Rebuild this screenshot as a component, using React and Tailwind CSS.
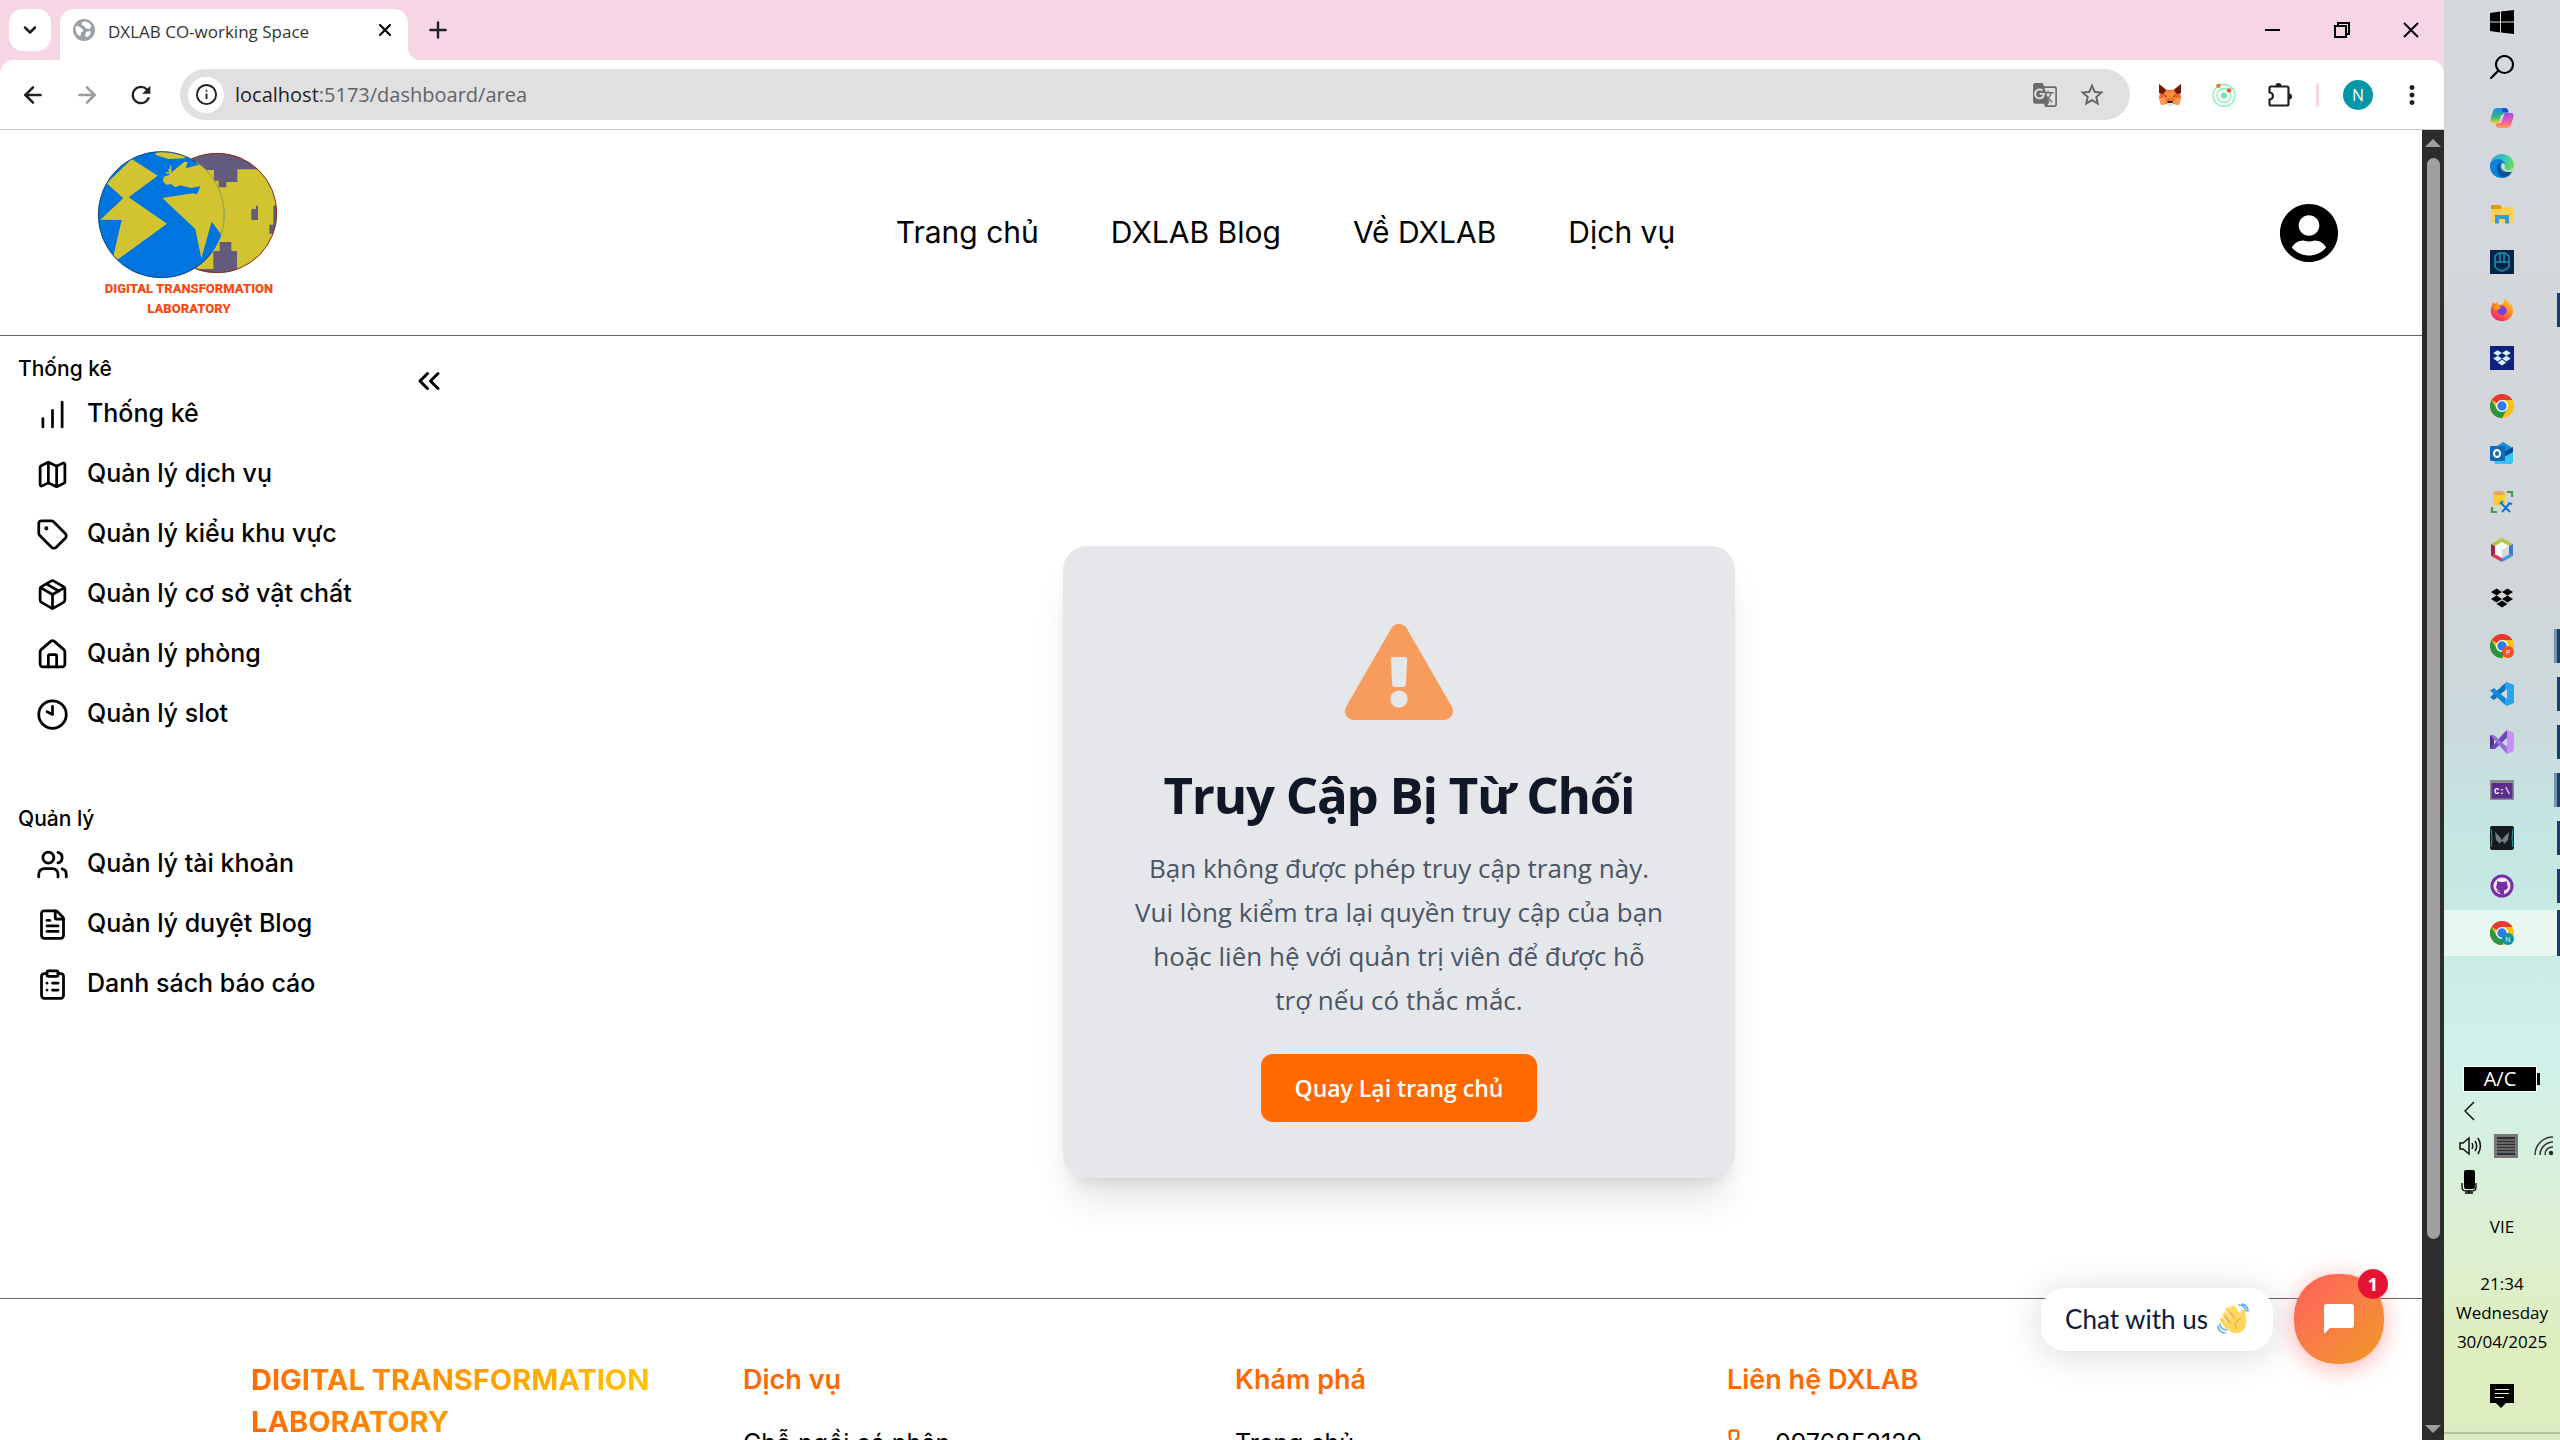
import React from "react";
import {
  ArrowLeft,
  ArrowRight,
  ChevronDown,
  ChevronsLeft,
  ChartNoAxesColumnIncreasing,
  ClipboardList,
  Clock10,
  FileText,
  House,
  Info,
  Map as MapIcon,
  Package,
  Phone,
  Plus,
  Tag,
  Users,
  X,
} from "lucide-react";
import { FaExclamationTriangle, FaUserCircle } from "react-icons/fa";
import { MdGTranslate, MdStarOutline, MdMoreVert, MdRefresh } from "react-icons/md";

const UI = "font-['Open_Sans','Noto_Sans',sans-serif]";
const BRAND = "font-['Inter','Noto_Sans',sans-serif]";

/* ---------- Browser chrome ---------- */

function Favicon() {
  return (
    <svg viewBox="0 0 24 24" className="size-[22px]">
      <circle cx="12" cy="12" r="12" fill="#9aa0a6" />
      <path d="M3 8c3-1 4 1 6 2s3 3 1 4-1 3-2 5c-3-1-6-5-5-11zM11 3c3-1 8 1 9 5l-2 3-4-1c-2-1-1-3-3-3s-2-3 0-4zM15 14l4-1c1 3-1 6-5 7-1-2-1-5 1-6z" fill="#fff" />
    </svg>
  );
}

function MetaMask() {
  return (
    <svg viewBox="0 0 24 24" className="size-6">
      <path d="M1 1l8 6h6l8-6-1 9 1 5-2 7-6-1-3 2-3-2-6 1-2-7 1-5z" fill="#f5672b" />
      <path d="M1 1l7 6-3 4-4-1zM23 1l-7 6 3 4 4-1z" fill="#6b1d0b" />
      <path d="M8 8h8l2 6-6 2-6-2z" fill="#ff8a3c" />
      <path d="M1 15h6l2 5-6 2zM23 15h-6l-2 5 6 2z" fill="#ff9a55" />
      <path d="M6.500 12l3 1.500H7zM17.500 12l-3 1.500H17z" fill="#3a1408" />
      <path d="M9 19h6v3l-3 1-3-1z" fill="#dfe3ea" />
      <path d="M10 18h4l1 2H9z" fill="#2b2320" />
    </svg>
  );
}

function Radar() {
  return (
    <svg viewBox="0 0 24 24" className="size-6" fill="none">
      <circle cx="12" cy="12.500" r="11" stroke="#86f3b0" strokeWidth="1.300" />
      <circle cx="12" cy="12.500" r="7" stroke="#7df0c0" strokeWidth="1.300" />
      <circle cx="12" cy="12.500" r="3" fill="#6fe8a0" />
      <circle cx="6.500" cy="2.800" r="2.300" fill="#f47b3f" />
      <circle cx="17" cy="7.500" r="2.300" fill="#ef5a35" />
    </svg>
  );
}

function Puzzle() {
  return (
    <svg viewBox="0 0 24 24" className="size-6">
      <path d="M3 3.500h16a1.500 1.500 0 0 1 1.500 1.500v16a1.500 1.500 0 0 1-1.500 1.500H3A1.500 1.500 0 0 1 1.500 21v-4.500a3.500 3.500 0 0 0 0-7V5A1.500 1.500 0 0 1 3 3.500z" fill="none" stroke="#202124" strokeWidth="2.200" strokeLinejoin="round" />
      <path d="M7.500 3a3 3 0 0 1 6 0zM21 10.500a3 3 0 0 1 0 6z" fill="#202124" />
    </svg>
  );
}

function WindowButtons() {
  return (
    <div className="ml-auto flex items-center gap-[53px] pr-[25px]">
      <button aria-label="Minimize">
        <svg viewBox="0 0 16 16" className="size-4" stroke="#000" strokeWidth="2"><path d="M0 8h15" /></svg>
      </button>
      <button aria-label="Restore">
        <svg viewBox="0 0 16 16" className="size-4" stroke="#000" strokeWidth="2" fill="none">
          <path d="M1 4h11v11H1zM4 4V1h11v11h-3" />
        </svg>
      </button>
      <button aria-label="Close window">
        <svg viewBox="0 0 16 16" className="size-4" stroke="#000" strokeWidth="2"><path d="M1 1l14 14M15 1L1 15" /></svg>
      </button>
    </div>
  );
}

function TabStrip() {
  return (
    <div className="flex h-[60px] items-center bg-[#f6d5e4] pl-[9px]">
      <button aria-label="Search tabs" className="flex size-[42px] items-center justify-center rounded-[14px] bg-white">
        <ChevronDown className="size-5 text-[#202124]" strokeWidth={3} />
      </button>
      <div className="ml-[9px] flex h-[51px] w-[348px] items-center self-end rounded-t-[14px] bg-white pr-[13px] pb-[9px] pl-[13px]">
        <Favicon />
        <span className={`ml-[13px] pt-1 text-[17px] text-[#333] ${UI}`}>DXLAB CO-working Space</span>
        <button aria-label="Close tab" className="ml-auto">
          <X className="size-5 text-black" strokeWidth={2.5} />
        </button>
      </div>
      <div className="h-3 w-3 self-end bg-white">
        <div className="h-3 w-3 rounded-bl-xl bg-[#f6d5e4]" />
      </div>
      <button aria-label="New tab" className="ml-[5px]">
        <Plus className="size-[26px] text-[#202124]" strokeWidth={2.2} />
      </button>
      <WindowButtons />
    </div>
  );
}

function Toolbar() {
  return (
    <div className="bg-[#f6d5e4]">
      <div className="flex h-[70px] items-center rounded-t-[14px] border-b border-[#c8c8c8] bg-white pl-5">
        <button aria-label="Back"><ArrowLeft className="size-[26px] text-[#202124]" strokeWidth={2.3} /></button>
        <button aria-label="Forward" className="ml-7"><ArrowRight className="size-[26px] text-[#9a9a9a]" strokeWidth={2.3} /></button>
        <button aria-label="Reload" className="ml-[27px]"><MdRefresh className="size-[28px] text-[#202124]" /></button>
        <div className="ml-[25px] flex h-[51px] flex-1 items-center rounded-full bg-[#e0e0e0] pr-6 pl-2">
          <button aria-label="Site information" className="flex size-9 items-center justify-center rounded-full bg-white">
            <Info className="size-[23px] text-[#202124]" strokeWidth={2} />
          </button>
          <div className={`ml-[11px] text-[20px] text-[#5f6368] ${UI}`}>
            <span className="text-[#1f1f1f]">localhost</span>:5173/dashboard/area
          </div>
          <button aria-label="Translate this page" className="ml-auto"><MdGTranslate className="size-[26px] text-[#6a6a6a]" /></button>
          <button aria-label="Bookmark" className="ml-5"><MdStarOutline className="size-7 text-[#5f6368]" /></button>
        </div>
        <div className="flex items-center pr-[17px] pl-7">
          <button aria-label="MetaMask"><MetaMask /></button>
          <button aria-label="Radar extension" className="ml-[30px]"><Radar /></button>
          <button aria-label="Extensions" className="ml-8"><Puzzle /></button>
          <span className="ml-6 h-6 w-[3px] rounded bg-[#f6d5e4]" />
          <button aria-label="Profile" className={`ml-6 flex size-[30px] items-center justify-center rounded-full bg-[#0097a7] text-[16px] text-white ${UI}`}>N</button>
          <button aria-label="Menu" className="ml-6"><MdMoreVert className="size-[30px] text-[#202124]" /></button>
        </div>
      </div>
    </div>
  );
}

/* ---------- Page ---------- */

function Logo() {
  return (
    <div className="relative mt-[5px] mr-2 h-[180px] w-[190px]">
      <svg viewBox="0 0 570 540" className="h-full w-full">
        <clipPath id="left-globe"><circle cx="202" cy="209" r="190" /></clipPath>
        <clipPath id="right-globe"><circle cx="369" cy="204" r="180" /></clipPath>
        <g clipPath="url(#right-globe)">
          <rect width="570" height="540" fill="#d2c430" />
          <path d="M280 0h290v73H430v38h-33v16h-23v-20h-14V75h-80zM472 192h14v-10h6v43h-20zM538 182h20v84h-32v-27h12zM358 318h19v-27h35v27h17v80H300v-26h58z" fill="#635b7b" />
        </g>
        <circle cx="369" cy="204" r="179" fill="none" stroke="#8f2f25" strokeWidth="3" />
        <g clipPath="url(#left-globe)">
          <rect width="570" height="540" fill="#0075e0" />
          <path d="M185 10h88v30l-50 2-38-12zM113 42l78 50-87 65 115 79L72 343l-15-5 26-113-64-1 69-64-50-45z" fill="#d2c430" />
          <path d="M262 58l9-8 10 2-6 18 46-12 90 40v172l-28 0-30-40-31 110-18-88-99-93 92-14 12 3 10-24-28 5-20-5-12-3-16 6-10-9-16 1-10-10 2-14 14-4z" fill="#d2c430" />
          <path d="M230 62v20l-14 2M224 72l6 14" fill="none" stroke="#d2c430" strokeWidth="4" />
        </g>
        <circle cx="202" cy="209" r="189" fill="none" stroke="#1a4d86" strokeWidth="3" strokeDasharray="890 298" strokeDashoffset="-120" />
        <path d="M305 50A190 190 0 0 1 380 270" fill="none" stroke="#aaa43c" strokeWidth="3" />
      </svg>
      <div className="absolute inset-x-0 top-[134px] text-center font-['Roboto',sans-serif] text-[13px] leading-5 font-black text-[#fb4b12]">
        DIGITAL TRANSFORMATION
        <br />
        LABORATORY
      </div>
    </div>
  );
}

function Header() {
  return (
    <header className="flex h-[206px] items-center justify-between border-b border-[#666] pr-[83px] pl-[94px]">
      <Logo />
      <nav className={`flex gap-[72px] text-[30px] text-black ${BRAND}`}>
        <a href="#home">Trang chủ</a>
        <a href="#blog">DXLAB Blog</a>
        <a href="#about">Về DXLAB</a>
        <a href="#services">Dịch vụ</a>
      </nav>
      <button aria-label="Account"><FaUserCircle className="size-[60px] text-black" /></button>
    </header>
  );
}

const MENU = [
  {
    title: "Thống kê",
    items: [
      [ChartNoAxesColumnIncreasing, "Thống kê"],
      [MapIcon, "Quản lý dịch vụ"],
      [Tag, "Quản lý kiểu khu vực"],
      [Package, "Quản lý cơ sở vật chất"],
      [House, "Quản lý phòng"],
      [Clock10, "Quản lý slot"],
    ],
  },
  {
    title: "Quản lý",
    items: [
      [Users, "Quản lý tài khoản"],
      [FileText, "Quản lý duyệt Blog"],
      [ClipboardList, "Danh sách báo cáo"],
    ],
  },
];

function Sidebar() {
  return (
    <aside className={`flex w-[460px] justify-between pt-[18px] pr-[13px] pl-[18px] text-black ${BRAND}`}>
      <div className="flex flex-col gap-[60px]">
        {MENU.map((group) => (
          <section key={group.title}>
            <h2 className="text-[21px] leading-[30px] font-medium">{group.title}</h2>
            <ul>
              {group.items.map(([Icon, label]) => (
                <li key={label}>
                  <a href="#menu" className="flex h-[60px] items-center gap-[18px] pl-[18px] text-[25px] font-medium">
                    <Icon className="size-[33px]" strokeWidth={2} />
                    {label}
                  </a>
                </li>
              ))}
            </ul>
          </section>
        ))}
      </div>
      <button aria-label="Collapse sidebar" className="mt-[9px] self-start">
        <ChevronsLeft className="size-9" strokeWidth={2} />
      </button>
    </aside>
  );
}

function DeniedCard() {
  return (
    <section className={`flex w-[672px] flex-col items-center rounded-3xl bg-[#e5e7eb] pt-[78px] pb-14 text-center shadow-[0_30px_38px_-8px_rgba(0,0,0,0.1),0_12px_15px_-8px_rgba(0,0,0,0.1)] ${UI}`}>
      <FaExclamationTriangle className="h-24 w-[108px] text-[#f79c5c]" />
      <h1 className="mt-11 text-[51px] leading-[60px] font-bold tracking-tight text-[#101828]">Truy Cập Bị Từ Chối</h1>
      <p className="mt-[22px] text-[26px] leading-[44px] text-[#4a5565]">
        Bạn không được phép truy cập trang này.
        <br />
        Vui lòng kiểm tra lại quyền truy cập của bạn
        <br />
        hoặc liên hệ với quản trị viên để được hỗ
        <br />
        trợ nếu có thắc mắc.
      </p>
      <button className="mt-8 h-[68px] rounded-xl bg-[#ff6900] px-[34px] text-[23px] font-semibold text-white">Quay Lại trang chủ</button>
    </section>
  );
}

function FooterColumn({ title, children }) {
  return (
    <div>
      <h3 className="text-[27px] leading-[42px] font-semibold text-[#ff6900]">{title}</h3>
      <div className="mt-6 flex items-center text-[25px] leading-9 text-black">{children}</div>
    </div>
  );
}

function Footer() {
  return (
    <footer className={`border-t border-[#666] pt-[60px] ${BRAND}`}>
      <div className="mx-auto grid max-w-[1920px] grid-cols-4 gap-12">
        <div>
          <h2 className="w-[424px] bg-gradient-to-r from-[#ff6900] to-[#fdc700] bg-clip-text text-[29px] leading-[42px] font-bold text-transparent">
            DIGITAL TRANSFORMATION LABORATORY
          </h2>
        </div>
        <FooterColumn title="Dịch vụ"><a href="#seat">Chỗ ngồi cá nhân</a></FooterColumn>
        <FooterColumn title="Khám phá"><a href="#home">Trang chủ</a></FooterColumn>
        <FooterColumn title="Liên hệ DXLAB">
          <Phone className="mr-[18px] size-[30px] text-[#ff6900]" strokeWidth={2} />
          <a href="#phone">0976852120</a>
        </FooterColumn>
      </div>
    </footer>
  );
}

function WavingHand() {
  return (
    <svg viewBox="0 0 32 32" className="size-8" fill="none" strokeLinecap="round">
      <path d="M8 12l8 10M11 7l9 11M16 5l7 10" stroke="#ffd65c" strokeWidth="5" />
      <path d="M5 17l6 8" stroke="#ffd65c" strokeWidth="4.500" />
      <path d="M9 22c2 7 9 10 15 7 5-3 6-9 5-14-1-4 0-8-3-8s-2 4-3 8l-7-3z" fill="#ffd65c" />
      <path d="M19 25c-2-4 0-7 4-9M8 14l5 6M13 9l5 7" stroke="#e6a355" strokeWidth="1.200" />
      <path d="M22 2c4 0 6 2 7 6M25 1c4 1 6 3 6 7M1 23c0 4 3 7 7 7M3 21c0 3 2 5 6 6" stroke="#5daef0" strokeWidth="1.600" />
    </svg>
  );
}

function ChatWidget() {
  return (
    <div className="absolute right-[38px] bottom-[76px] flex items-center gap-[21px]">
      <button className="flex h-[63px] items-center gap-[9px] rounded-3xl bg-white px-6 font-['Lato',sans-serif] text-[26px] text-[#0e1a3a] shadow-[0_4px_36px_rgba(0,18,46,0.16)]">
        Chat with us
        <WavingHand />
      </button>
      <button aria-label="Open chat" className="relative flex size-[90px] items-center justify-center rounded-[42px] bg-gradient-to-br from-[#ff5c5c] to-[#f0991a] shadow-[0_4px_24px_rgba(255,60,60,0.4)]">
        <svg viewBox="0 0 30 30" className="size-[30px]" fill="#fff"><path d="M3 0h24a3 3 0 0 1 3 3v18a3 3 0 0 1-3 3H6l-6 6V3a3 3 0 0 1 3-3z" /></svg>
        <span className={`absolute -top-[5px] -right-1 flex size-[30px] items-center justify-center rounded-full bg-[#e81332] text-[18px] font-bold text-white ${UI}`}>1</span>
      </button>
    </div>
  );
}

function Scrollbar() {
  return (
    <div className="flex w-[22px] shrink-0 flex-col items-center bg-[#2c2c2c] pt-[9px] pb-[7px]">
      <svg viewBox="0 0 16 8" className="h-2 w-4" fill="#9f9f9f"><path d="M8 0l8 8H0z" /></svg>
      <div className="mt-[11px] h-[1081px] w-[13px] rounded-full bg-[#9f9f9f]" />
      <svg viewBox="0 0 16 8" className="mt-auto h-2 w-4" fill="#9f9f9f"><path d="M0 0h16L8 8z" /></svg>
    </div>
  );
}

/* ---------- Taskbar ---------- */

function ChromeGlyph({ badge, color }) {
  return (
    <>
      <circle cx="12" cy="12" r="12" fill="#fbc116" />
      <path d="M12 12L1.600 6A12 12 0 0 1 22.400 6H12z" fill="#e33b2e" />
      <path d="M1.600 6A12 12 0 0 0 12 24l5.200-9L12 12 6.800 15z" fill="#2a9444" />
      <circle cx="12" cy="12" r="6" fill="#fff" />
      <circle cx="12" cy="12" r="4.700" fill="#2f7cf0" />
      {badge && (
        <>
          <circle cx="18" cy="18" r="6" fill={color} />
          <text x="18" y="20.500" textAnchor="middle" fontSize="7" fill="#fff" fontFamily="Open Sans, sans-serif">{badge}</text>
        </>
      )}
    </>
  );
}

const DROPBOX = "M6.500 2.500l5.500 3.500-5.500 3.500L1 6zM17.500 2.500L23 6l-5.500 3.500L12 6zM6.500 9.500L12 13l-5.500 3.500L1 13zM17.500 9.500L23 13l-5.500 3.500L12 13zM12 14.500l5.500 3.500-5.500 3.500L6.500 18z";

const APPS = [
  { name: "Copilot", art: (
    <>
      <defs>
        <linearGradient id="cpa" x1="0" y1="0" x2="0" y2="1"><stop offset="0" stopColor="#1d8df0" /><stop offset=".6" stopColor="#35b58a" /><stop offset="1" stopColor="#f2d21f" /></linearGradient>
        <linearGradient id="cpb" x1="0" y1="0" x2="0" y2="1"><stop offset="0" stopColor="#a34bf0" /><stop offset=".6" stopColor="#f55d9a" /><stop offset="1" stopColor="#ffa14d" /></linearGradient>
      </defs>
      <path d="M7 2h8c2 0 3 1 3.500 4l-5 1-3 8c-.5 1.500-1 2-2.500 2H3c-2 0-3-1-2.500-4L3 5c.7-2 2-3 4-3z" fill="url(#cpa)" />
      <path d="M17 22H9c-2 0-3-1-3.500-4l5-1 3-8c.5-1.500 1-2 2.500-2h5c2 0 3 1 2.500 4L21 19c-.7 2-2 3-4 3z" fill="url(#cpb)" />
      <path d="M12 2h3c2 0 3 1 3.500 4.500H13c-1 0-1-3-1-4.500z" fill="#1552c9" />
      <path d="M11 9h3l-3 8H9z" fill="#d4d8db" />
    </>
  ) },
  { name: "Edge", art: (
    <>
      <defs><linearGradient id="edg" x1="0" y1="0" x2="1" y2=".4"><stop offset="0" stopColor="#1fa5e8" /><stop offset=".6" stopColor="#35c8b8" /><stop offset="1" stopColor="#6be04e" /></linearGradient></defs>
      <circle cx="12" cy="12" r="12" fill="url(#edg)" />
      <path d="M0 12c0-4 4-7 8-7s7 3 7 6c-2-2-6-1-6 3 0 5 6 8 12 6-2 2-5 4-9 4C5 24 0 19 0 12z" fill="#0f7fd8" />
      <path d="M7 14c0-3 2-5 5-5-2 2-2 4-.5 6.500C14 19 19 18 22 17c-1 3-5 6-9 6-4-1-6-5-6-9z" fill="#0d4f9e" />
      <path d="M12 9c2 0 3 1.500 3 3s-1 2 0 3c2 2 6 2 9-1v3c-4 2-9 1-11.500-2-1-2-2-4-.5-6z" fill="#d4d8db" />
    </>
  ) },
  { name: "File Explorer", art: (
    <>
      <path d="M1 3h9l2 2-2 3H1z" fill="#e09c05" />
      <path d="M1 7h10l2-2h10v16H1z" fill="#fcd152" />
      <path d="M5 13h14v8.500h-4V17h-6v4.500H5z" fill="#3a96dd" />
    </>
  ) },
  { name: "Mouse Center", art: (
    <>
      <path d="M0 0h24v24H0z" fill="#04234a" />
      <path d="M5 6l4-3h6l4 3v10c0 2-4 4-7 5-3-1-7-3-7-5zM5 12h5V3.500M19 12h-5V3.500M10 12h4" fill="none" stroke="#119aaf" strokeWidth="1.500" />
    </>
  ) },
  { name: "Firefox", mark: 1, art: (
    <>
      <defs><linearGradient id="ffx" x1="1" y1="0" x2=".3" y2="1"><stop offset="0" stopColor="#ffe23c" /><stop offset=".5" stopColor="#ff8a1e" /><stop offset="1" stopColor="#f5246e" /></linearGradient></defs>
      <path d="M15 0c1 3 4 4 6 6 3 5 3 10-1 14s-11 4-15 1C0 17 0 11 2 7l1-3 2 2c1-1 2-2 3-2l-1 3 6-1c1-2 1-4 2-6z" fill="url(#ffx)" />
      <circle cx="12" cy="12.500" r="4.700" fill="#7a42e0" />
      <path d="M4 8c3-1 5 0 7 1 0 2-3 2-4 3l-3-1z" fill="#ff9a20" />
    </>
  ) },
  { name: "Dropbox promotion", art: (
    <>
      <path d="M0 0h24v24H0z" fill="#10217c" />
      <path d={DROPBOX} transform="translate(2.400 2.200) scale(.8)" fill="#d5f0ff" />
    </>
  ) },
  { name: "Chrome", art: <ChromeGlyph /> },
  { name: "Outlook", art: (
    <>
      <path d="M4 6l9-6 10 6v14l-2 2H5z" fill="#1490df" />
      <path d="M6 14l17-7v13l-2 2H5z" fill="#35c4f3" />
      <path d="M14 10l9-5v5l-9 5z" fill="#0a4a96" />
      <rect y="4" width="15" height="15" rx="1" fill="#0f6cbd" />
      <ellipse cx="7" cy="11.500" rx="3" ry="3.500" fill="none" stroke="#fff" strokeWidth="2" />
    </>
  ) },
  { name: "SQL Server Management Studio", art: (
    <>
      <path d="M3 3h12v11c-3 2-9 2-12 0z" fill="#fcd02c" />
      <ellipse cx="9" cy="3" rx="6" ry="2" fill="#eba45c" />
      <path d="M17 2h5v5M2 17v5h5" fill="none" stroke="#3fa045" strokeWidth="2.200" />
      <path d="M11 13l9 9M20 13l-8 9M10 14l3-3M18 13l4 1" stroke="#1578cf" strokeWidth="2" />
    </>
  ) },
  { name: "NetBeans", art: (
    <>
      <path d="M12 0l11 6-4 2-7-4-7 4-4-2z" fill="#b0c644" />
      <path d="M1 6l4 2v8l-4 2z" fill="#a02542" />
      <path d="M23 6l-4 2v8l4 2z" fill="#3e78cc" />
      <path d="M1 18l4-2 7 4v4z" fill="#d83a55" />
      <path d="M23 18l-4-2-7 4v4z" fill="#4c97e6" />
      <path d="M12 4l7 4v8l-7 4-7-4V8z" fill="#f7f9fa" />
      <path d="M12 12l7-4v8l-7 4z" fill="#d3dce4" />
    </>
  ) },
  { name: "Dropbox", art: <path d={DROPBOX} fill="#000" /> },
  { name: "Chrome profile P", mark: 2, art: <ChromeGlyph badge="P" color="#f4511e" /> },
  { name: "Visual Studio Code", mark: 1, art: (
    <>
      <path d="M17 0v7L4 18l-4-2.500L13 3z" fill="#0a72b8" />
      <path d="M17 24v-7L4 6 0 8.500 13 21z" fill="#1489d2" />
      <path d="M17 0l7 3v18l-7 3-2-2V2z" fill="#27a5f0" />
      <path d="M17 7v10l-6-5z" fill="#d0dade" />
    </>
  ) },
  { name: "Visual Studio", mark: 1, art: (
    <>
      <path d="M0 5l4 2v10l-4 2z" fill="#52328f" />
      <path d="M17 0v8L5 19H0L13 4z" fill="#7048b3" />
      <path d="M0 5h4l13 12v7z" fill="#9a6ddb" />
      <path d="M17 0l7 3v18l-7 3z" fill="#c991fa" />
      <path d="M17 8v8l-4-4z" fill="#cbdcdf" />
    </>
  ) },
  { name: "Developer Command Prompt", mark: 2, art: (
    <>
      <path d="M0 2h24v20H0z" fill="#8b8b91" />
      <path d="M1.500 5h21v15.500h-21z" fill="#5b2d91" />
      <text x="12" y="16" textAnchor="middle" fontSize="9" fontWeight="bold" fill="#fff" fontFamily="Liberation Mono, monospace">C:\</text>
    </>
  ) },
  { name: "Predator Sense", mark: 1, art: (
    <>
      <rect width="24" height="24" rx="2" fill="#17191b" />
      <path d="M5 6l5 5v7l-4-4zM19 6l-5 5v7l4-4zM10 11l2 3 2-3v6l-2-2-2 2z" fill="#777c80" />
      <path d="M1 3l1 9-1 9M23 3l-1 9 1 9" stroke="#16a5bd" fill="none" />
    </>
  ) },
  { name: "GitHub Desktop", mark: 1, art: (
    <>
      <circle cx="12" cy="12" r="11.500" fill="#7a2ea6" />
      <circle cx="12" cy="12" r="8.500" fill="#f4e9fa" />
      <path d="M7 7l3 1h4l3-1v3c2 4 0 6-3 6.500v4h-4v-2c-2 0-3-1-3.500-2.500 1 0 1.500 1 3 1v-.5C7 16 5 14 7 10z" fill="#7a2ea6" />
    </>
  ) },
  { name: "Chrome profile N", mark: 1, active: true, art: <ChromeGlyph badge="N" color="#0097a7" /> },
];

function AppButton({ app }) {
  return (
    <li className={app.active ? "flex h-[46px] items-center bg-white/60" : "flex h-12 items-center"}>
      <button aria-label={app.name} className="mr-[43px] ml-[46px]">
        <svg viewBox="0 0 24 24" className="size-6">{app.art}</svg>
      </button>
      {app.mark && (
        <span className={`ml-auto w-[3px] bg-[#173f6e] ${app.active ? "h-full" : "h-[34px]"} ${app.mark === 2 ? "shadow-[-3px_0_0_#7890ae]" : ""}`} />
      )}
    </li>
  );
}

function Tray() {
  return (
    <div className={`flex flex-col text-black ${UI}`}>
      <div className="ml-[19px] flex items-center">
        <span className="flex h-[26px] w-[74px] items-center justify-center border border-white bg-black text-[20px] text-white">A/C</span>
        <span className="h-3 w-[3px] bg-black" />
      </div>
      <button aria-label="Show hidden icons" className="mt-[9px] ml-5 self-start">
        <svg viewBox="0 0 11 20" className="h-5 w-[11px]" fill="none" stroke="#111" strokeWidth="1.500"><path d="M10 1l-9 9 9 9" /></svg>
      </button>
      <div className="mt-[13px] ml-[15px] flex h-6 items-center">
        <svg viewBox="0 0 24 20" className="h-5 w-6" fill="none" stroke="#111" strokeWidth="1.500">
          <path d="M1 7v6h3l6 5V2L4 7zM13 7c1 2 1 4 0 6M16 5c2 3 2 7 0 10M19 2c3 5 3 11 0 16" />
        </svg>
        <svg viewBox="0 0 24 24" className="ml-[11px] size-6">
          <path d="M0 0h24v24H0z" fill="#777" />
          <path d="M3 3h18v18H3z" fill="#2f2f2f" />
          <path d="M3 6h18M3 9h18M3 12h18M3 15h18M3 18h18" stroke="#a0a0a0" />
        </svg>
        <svg viewBox="0 0 20 20" className="ml-4 size-5" fill="none" stroke="#333" strokeWidth="1.500">
          <path d="M1 19C1 9 9 1 19 1M6 19C6 12 12 6 19 6M11 19c0-5 3-8 8-8" />
          <circle cx="17" cy="17" r="1.500" fill="#000" />
        </svg>
      </div>
      <svg viewBox="0 0 16 24" className="mt-3 ml-[17px] h-6 w-4">
        <rect x="3" width="11" height="19" rx="2" fill="#000" />
        <path d="M1 13v4c0 3 2 4 4 4h6c3 0 4-1 4-4v-4M8 20v3M4 23h8" fill="none" stroke="#000" strokeWidth="1.300" />
      </svg>
      <div className="mt-[18px] text-center text-[17px] leading-[29px]">VIE</div>
      <div className="mt-7 text-center text-[17px] leading-[29px]">
        21:34
        <br />
        Wednesday
        <br />
        30/04/2025
      </div>
      <button aria-label="Notifications" className="mt-7 self-center">
        <svg viewBox="0 0 24 24" className="size-6">
          <path d="M0 0h24v19h-8l-5 5-5-5H0z" fill="#000" />
          <path d="M5 5.500h14M5 9.500h14M5 13.500h9" stroke="#e6f0cc" />
        </svg>
      </button>
      <div className="mt-6 mb-[6px] h-[2px] bg-[#b3c29a]" />
    </div>
  );
}

function Taskbar() {
  return (
    <aside className="flex w-[116px] shrink-0 flex-col bg-[linear-gradient(180deg,#d5d8dc_0%,#d2d5d9_38%,#cbd9dc_50%,#c4e5e2_57%,#c8ece2_66%,#d0f1ec_73%,#dbf0d6_84%,#dfeebd_94%,#dcecc0_100%)]">
      <button aria-label="Start" className="mt-[10px] self-center">
        <svg viewBox="0 0 24 24" className="size-6"><path d="M0 3l10-1.500v10H0zM11 1.400L24 0v11.500H11zM0 12.500h10v10L0 21zM11 12.500h13V24l-13-1.400z" /></svg>
      </button>
      <button aria-label="Search" className="mt-[21px] self-center">
        <svg viewBox="0 0 24 24" className="size-6" fill="none" stroke="#000" strokeWidth="2.200"><circle cx="14.500" cy="9.500" r="8.500" /><path d="M8.500 15.500L0 24" /></svg>
      </button>
      <ul className="mt-[15px]">
        {APPS.map((app) => <AppButton key={app.name} app={app} />)}
      </ul>
      <div className="mt-auto"><Tray /></div>
    </aside>
  );
}

export default function App() {
  return (
    <div className="flex h-screen overflow-hidden bg-white">
      <div className="flex min-w-0 flex-1 flex-col">
        <TabStrip />
        <Toolbar />
        <div className="relative flex min-h-0 flex-1">
          <div className="relative min-w-0 flex-1 overflow-hidden">
            <Header />
            <div className="flex">
              <Sidebar />
              <main className="flex flex-1 justify-center pt-[210px] pr-[84px] pb-[120px]">
                <DeniedCard />
              </main>
            </div>
            <Footer />
            <ChatWidget />
          </div>
          <Scrollbar />
        </div>
      </div>
      <Taskbar />
    </div>
  );
}
